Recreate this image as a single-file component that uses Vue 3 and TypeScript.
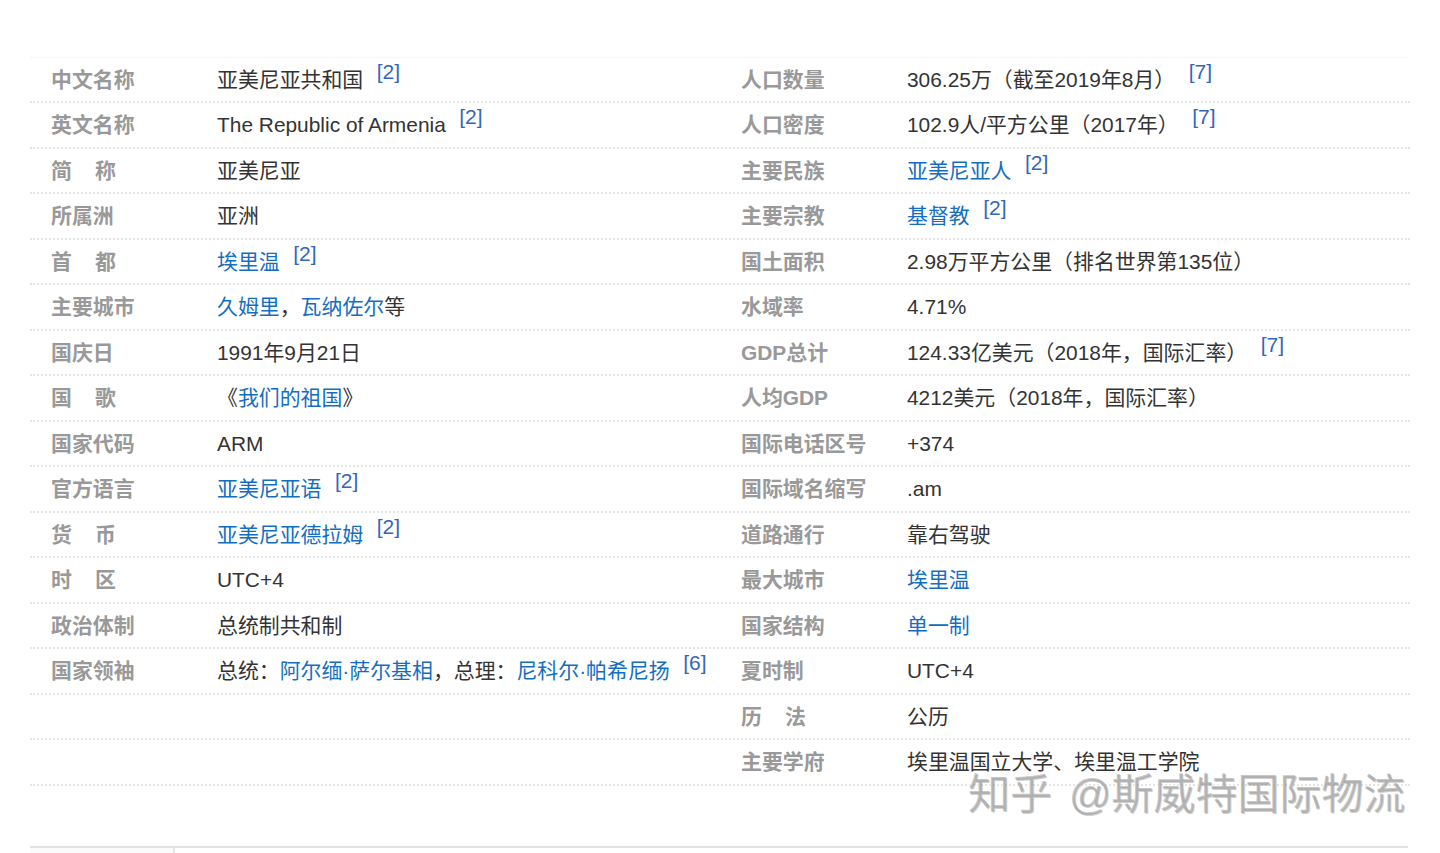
<script setup lang="ts">
type Seg = { t: string; k?: 'link' | 'sup' };
interface Cell { label: string; wide?: boolean; value: Seg[] }
const s = (t: string): Seg => ({ t });
const l = (t: string): Seg => ({ t, k: 'link' });
const r = (t: string): Seg => ({ t, k: 'sup' });
const left: Cell[] = [
  { label: '中文名称', value: [s('亚美尼亚共和国'), r('[2]')] },
  { label: '英文名称', value: [s('The Republic of Armenia'), r('[2]')] },
  { label: '简称', wide: true, value: [s('亚美尼亚')] },
  { label: '所属洲', value: [s('亚洲')] },
  { label: '首都', wide: true, value: [l('埃里温'), r('[2]')] },
  { label: '主要城市', value: [l('久姆里'), s('，'), l('瓦纳佐尔'), s('等')] },
  { label: '国庆日', value: [s('1991年9月21日')] },
  { label: '国歌', wide: true, value: [s('《'), l('我们的祖国'), s('》')] },
  { label: '国家代码', value: [s('ARM')] },
  { label: '官方语言', value: [l('亚美尼亚语'), r('[2]')] },
  { label: '货币', wide: true, value: [l('亚美尼亚德拉姆'), r('[2]')] },
  { label: '时区', wide: true, value: [s('UTC+4')] },
  { label: '政治体制', value: [s('总统制共和制')] },
  { label: '国家领袖', value: [s('总统：'), l('阿尔缅·萨尔基相'), s('，总理：'), l('尼科尔·帕希尼扬'), r('[6]')] },
  { label: '', value: [] },
  { label: '', value: [] },
];
const right: Cell[] = [
  { label: '人口数量', value: [s('306.25万（截至2019年8月）'), r('[7]')] },
  { label: '人口密度', value: [s('102.9人/平方公里（2017年）'), r('[7]')] },
  { label: '主要民族', value: [l('亚美尼亚人'), r('[2]')] },
  { label: '主要宗教', value: [l('基督教'), r('[2]')] },
  { label: '国土面积', value: [s('2.98万平方公里（排名世界第135位）')] },
  { label: '水域率', value: [s('4.71%')] },
  { label: 'GDP总计', value: [s('124.33亿美元（2018年，国际汇率）'), r('[7]')] },
  { label: '人均GDP', value: [s('4212美元（2018年，国际汇率）')] },
  { label: '国际电话区号', value: [s('+374')] },
  { label: '国际域名缩写', value: [s('.am')] },
  { label: '道路通行', value: [s('靠右驾驶')] },
  { label: '最大城市', value: [l('埃里温')] },
  { label: '国家结构', value: [l('单一制')] },
  { label: '夏时制', value: [s('UTC+4')] },
  { label: '历法', wide: true, value: [s('公历')] },
  { label: '主要学府', value: [s('埃里温国立大学、埃里温工学院')] },
];
const rows = left.map((c, i) => [c, right[i]]);
</script>

<template>
  <main class="page">
    <section class="info">
      <div v-for="(row, i) in rows" :key="i" class="row">
        <template v-for="(cell, j) in row" :key="j">
          <div class="label" :class="{ wide: cell.wide }">
            <span v-for="ch in (cell.wide ? cell.label.split('') : [cell.label])" :key="ch">{{ ch }}</span>
          </div>
          <div class="value">
            <span v-for="(seg, n) in cell.value" :key="n" :class="seg.k">{{ seg.t }}</span>
          </div>
        </template>
      </div>
    </section>
    <div class="tabs"><div class="tab"></div></div>
    <div class="mark">知乎 @斯威特国际物流</div>
  </main>
</template>

<style scoped>
.page {
  position: relative;
  width: 1440px;
  height: 853px;
  overflow: hidden;
  background: #fff;
  box-sizing: border-box;
  padding: 57px 30px 0;
  font-family: "Liberation Sans", "Noto Sans CJK SC", sans-serif;
  font-size: 20.9px;
  color: #333;
}
.info {
  width: 1380px;
  border-top: 1px dotted #f2f2f2;
}
.row {
  display: grid;
  grid-template-columns: 187px 503px 187px 1fr;
  height: 45.47px;
  box-sizing: border-box;
  border-bottom: 2px dotted #e4e4e4;
  line-height: 43.5px;
  white-space: nowrap;
}
.label {
  padding-left: 21px;
  font-weight: 700;
  color: #999;
}
.label.wide {
  display: flex;
  gap: 23px;
}
.link {
  color: #136ec2;
}
.sup {
  margin-left: 13.5px;
  color: #3366bb;
  font-size: 21px;
  line-height: 0;
  vertical-align: 8px;
}
.tabs {
  margin-top: 60px;
  width: 1378px;
  height: 20px;
  border-top: 2px solid #e2e2e2;
}
.tab {
  width: 143px;
  height: 20px;
  background: #fbfbfb;
  border-right: 2px solid #e6e6e6;
}
.mark {
  position: absolute;
  left: 968px;
  top: 775px;
  font-size: 42px;
  line-height: 40px;
  word-spacing: 5px;
  white-space: nowrap;
  color: rgba(150, 150, 150, 0.55);
  text-shadow: 1px 1px 0 rgba(120, 120, 120, 0.35), -1px -1px 0 rgba(255, 255, 255, 0.8);
}
</style>
